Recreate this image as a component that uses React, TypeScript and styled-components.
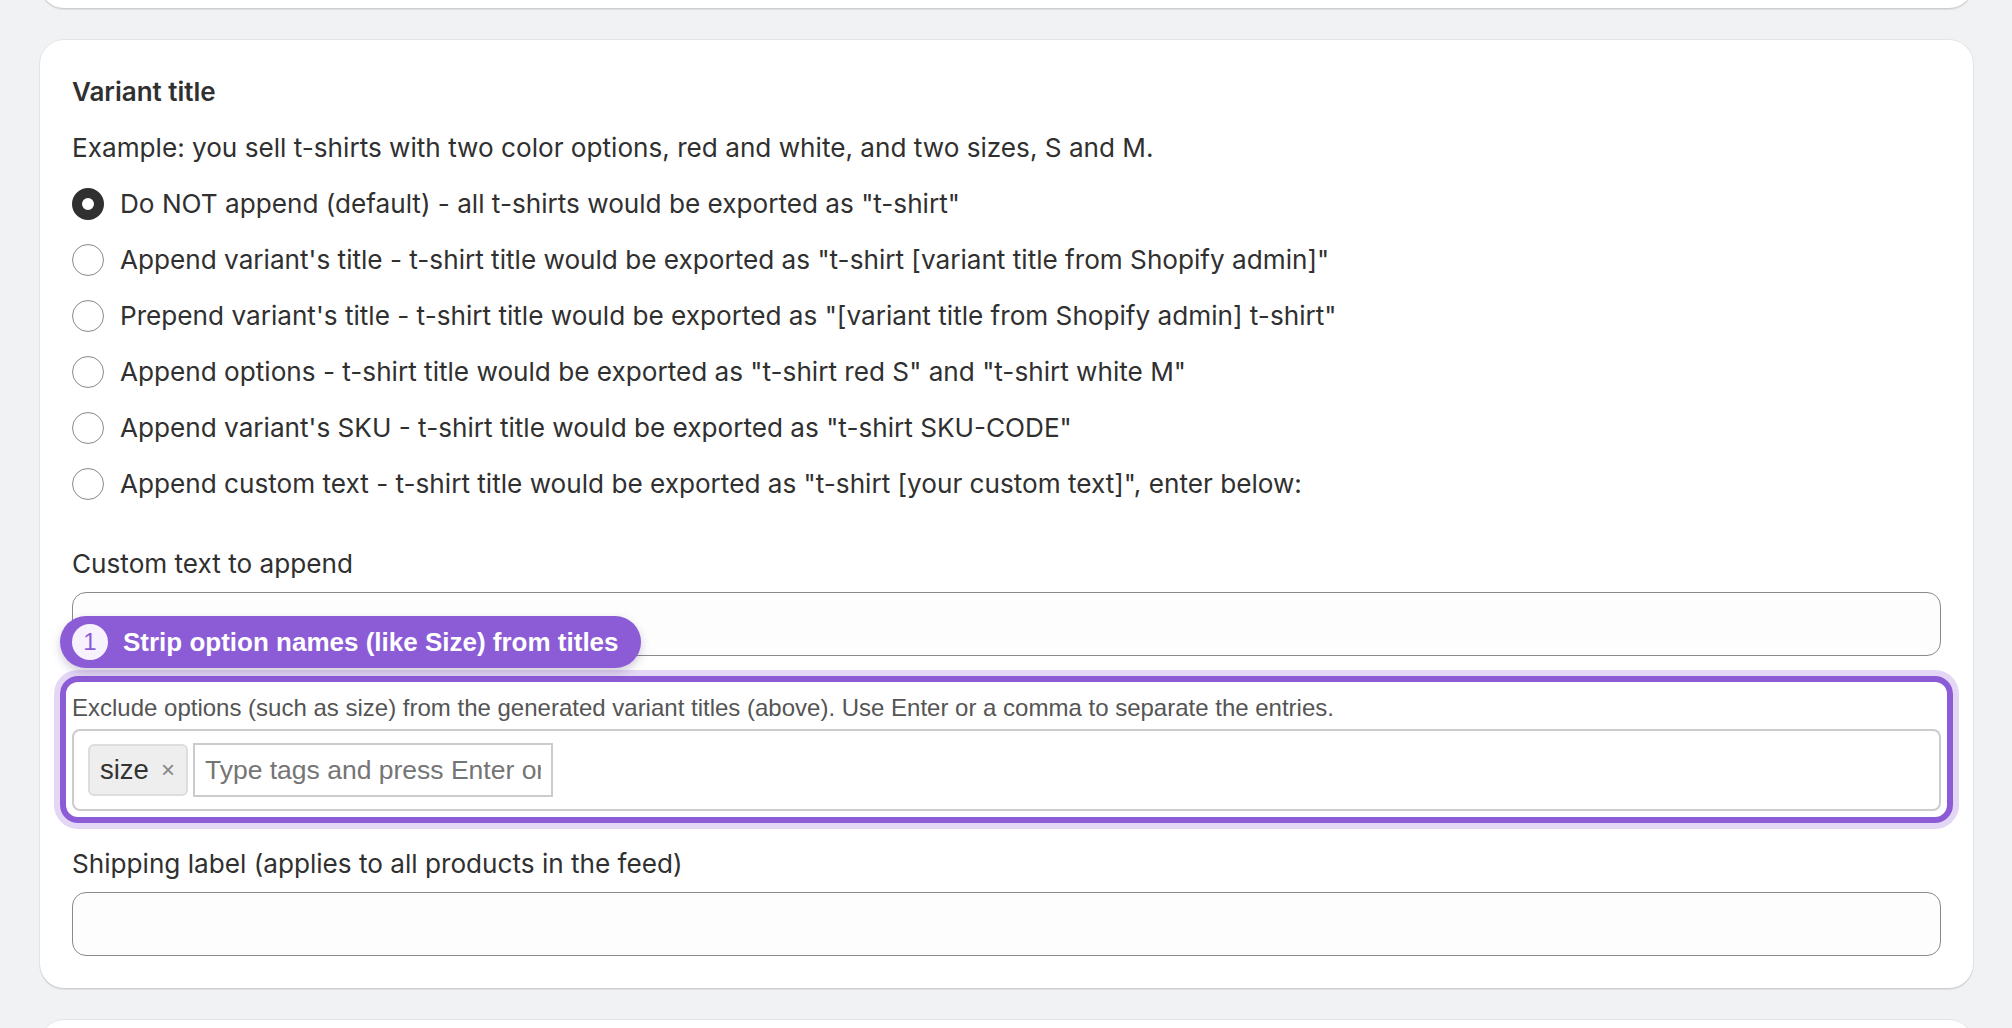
import React from "react";
import styled, { createGlobalStyle } from "styled-components";

const GlobalStyle = createGlobalStyle`
  html, body { margin: 0; padding: 0; }
  body {
    background: #f1f2f4;
    font-family: Inter, "Noto Sans", sans-serif;
    color: #303030;
    -webkit-font-smoothing: antialiased;
  }
  * { box-sizing: border-box; }
`;

const Page = styled.div`
  height: 1028px;
  overflow: hidden;
  padding: 0 39px 0 40px;
  display: flex;
  flex-direction: column;
  gap: 32px;
`;

const Card = styled.section<{ $clipTop?: boolean }>`
  background: #ffffff;
  border-radius: 24px;
  box-shadow: 0 0 0 1px rgba(0, 0, 0, 0.055), 0 2px 1px rgba(0, 0, 0, 0.09);
  padding: 32px;
  flex-shrink: 0;
  ${(p) => (p.$clipTop ? "margin-top: -92px; height: 100px;" : "")}
`;

const Heading = styled.h2`
  margin: 0 0 16px;
  font-size: 26px;
  line-height: 40px;
  font-weight: 600;
  color: #303030;
`;

const BodyText = styled.p`
  margin: 0 0 8px;
  font-size: 26.15px;
  line-height: 40px;
  color: #303030;
`;

const ChoiceList = styled.div`
  display: flex;
  flex-direction: column;
`;

const ChoiceRow = styled.label`
  display: flex;
  align-items: center;
  gap: 16px;
  height: 56px;
  font-size: 26.15px;
  line-height: 40px;
  color: #303030;
  cursor: pointer;
`;

const RadioDot = styled.span<{ $checked?: boolean }>`
  flex: 0 0 32px;
  width: 32px;
  height: 32px;
  border-radius: 50%;
  background: #ffffff;
  border: ${(p) => (p.$checked ? "10px solid #303030" : "1.5px solid #8a8a8a")};
`;

const Field = styled.div<{ $gapTop?: number }>`
  display: flex;
  flex-direction: column;
  gap: 8px;
  margin-top: ${(p) => p.$gapTop ?? 0}px;
`;

const FieldLabel = styled.label`
  font-size: 26.15px;
  line-height: 40px;
  color: #303030;
`;

const TextInput = styled.input`
  height: 64px;
  width: 100%;
  border: 1px solid #8a8a8a;
  border-radius: 14px;
  background: #fdfdfd;
  padding: 0 24px;
  font-family: Inter, sans-serif;
  font-size: 26px;
  color: #303030;
  outline: none;
`;

const Highlight = styled.div`
  position: relative;
  margin: 20px -12px 21px;
  border: 6px solid #8b5cd6;
  border-radius: 18px;
  box-shadow: 0 0 0 6px #e3d7f5;
  padding: 0 6px 6px;
  font-family: "Liberation Sans", Arial, sans-serif;
`;

const Badge = styled.div`
  position: absolute;
  left: -6px;
  bottom: calc(100% + 14px);
  height: 52px;
  display: flex;
  align-items: center;
  gap: 15px;
  padding: 0 22px 0 12px;
  background: #8b5cd6;
  color: #ffffff;
  border-radius: 26px;
  box-shadow: 0 4px 10px rgba(40, 20, 80, 0.22);
  font-family: "Liberation Sans", Arial, sans-serif;
  font-weight: 700;
  font-size: 26px;
  white-space: nowrap;
  z-index: 2;
`;

const BadgeNumber = styled.span`
  width: 36px;
  height: 36px;
  border-radius: 50%;
  background: #f7f2fe;
  color: #8b5cd6;
  display: flex;
  align-items: center;
  justify-content: center;
  font-size: 24px;
  font-weight: 400;
`;

const HelpText = styled.div`
  margin-top: 12px;
  font-size: 24px;
  line-height: 28px;
  color: #555555;
`;

const TagBox = styled.div`
  margin-top: 7px;
  border: 2px solid #cccccc;
  border-radius: 8px;
  padding: 12px 14px;
  display: flex;
  align-items: center;
  gap: 5px;
  background: #ffffff;
`;

const Tag = styled.span`
  display: inline-flex;
  align-items: center;
  gap: 12px;
  height: 52px;
  padding: 0 11px 0 10px;
  background: #eeeeee;
  border: 2px solid #dddddd;
  border-radius: 6px;
  font-size: 27.5px;
  color: #333333;
`;

const TagRemove = styled.span`
  font-size: 24px;
  color: #888888;
  line-height: 1;
`;

const TagInput = styled.input`
  width: 360px;
  height: 54px;
  border: 2px solid #cccccc;
  padding: 0 10px;
  font-family: "Liberation Sans", Arial, sans-serif;
  font-size: 26.5px;
  color: #333333;
  outline: none;
  &::placeholder {
    color: #757575;
  }
`;

const options = [
  'Do NOT append (default) - all t-shirts would be exported as "t-shirt"',
  'Append variant\'s title - t-shirt title would be exported as "t-shirt [variant title from Shopify admin]"',
  'Prepend variant\'s title - t-shirt title would be exported as "[variant title from Shopify admin] t-shirt"',
  'Append options - t-shirt title would be exported as "t-shirt red S" and "t-shirt white M"',
  'Append variant\'s SKU - t-shirt title would be exported as "t-shirt SKU-CODE"',
  'Append custom text - t-shirt title would be exported as "t-shirt [your custom text]", enter below:',
];

export default function App() {
  return (
    <>
      <GlobalStyle />
      <Page>
        <Card $clipTop />
        <Card>
          <Heading>Variant title</Heading>
          <BodyText>
            Example: you sell t-shirts with two color options, red and white, and two sizes, S and M.
          </BodyText>
          <ChoiceList>
            {options.map((o, i) => (
              <ChoiceRow key={i}>
                <RadioDot $checked={i === 0} />
                {o}
              </ChoiceRow>
            ))}
          </ChoiceList>
          <Field $gapTop={32}>
            <FieldLabel>Custom text to append</FieldLabel>
            <TextInput type="text" />
          </Field>
          <Highlight>
            <Badge>
              <BadgeNumber>1</BadgeNumber>
              Strip option names (like Size) from titles
            </Badge>
            <HelpText>
              Exclude options (such as size) from the generated variant titles (above). Use Enter or a comma to separate the entries.
            </HelpText>
            <TagBox>
              <Tag>
                size<TagRemove>×</TagRemove>
              </Tag>
              <TagInput type="text" placeholder="Type tags and press Enter or comma" />
            </TagBox>
          </Highlight>
          <Field>
            <FieldLabel>Shipping label (applies to all products in the feed)</FieldLabel>
            <TextInput type="text" />
          </Field>
        </Card>
        <Card />
      </Page>
    </>
  );
}
